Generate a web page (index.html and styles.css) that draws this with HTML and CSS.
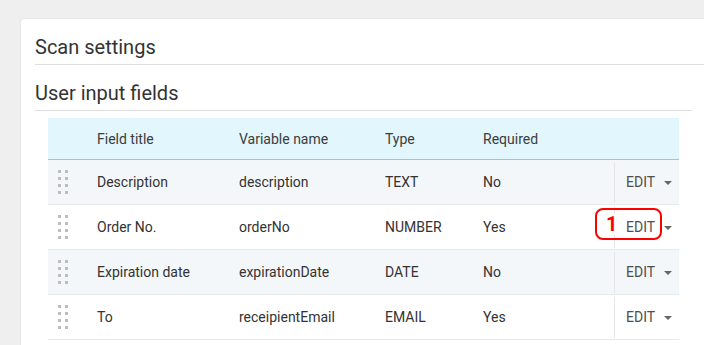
FILE: index.html
```html
<!DOCTYPE html>
<html lang="en">
<head>
  <meta charset="UTF-8">
  <title>Scan settings</title>
  <link rel="stylesheet" href="styles.css">
</head>
<body>
  <div class="card">
    <h2 class="section-title">Scan settings</h2>

    <div class="fields">
      <h2 class="section-title">User input fields</h2>

      <div class="field-table">
        <!-- header row -->
        <div class="row head">
          <div class="cell"></div>
          <div class="cell">Field title</div>
          <div class="cell">Variable name</div>
          <div class="cell">Type</div>
          <div class="cell">Required</div>
          <div class="cell"></div>
        </div>

        <div class="row odd">
          <div class="cell handle"><svg width="10" height="24" viewBox="0 0 10 24"><g fill="#bdbdbd"><rect x="0" y="0" width="3" height="3"/><rect x="7" y="0" width="3" height="3"/><rect x="0" y="7" width="3" height="3"/><rect x="7" y="7" width="3" height="3"/><rect x="0" y="14" width="3" height="3"/><rect x="7" y="14" width="3" height="3"/><rect x="0" y="21" width="3" height="3"/><rect x="7" y="21" width="3" height="3"/></g></svg></div>
          <div class="cell">Description</div>
          <div class="cell">description</div>
          <div class="cell">TEXT</div>
          <div class="cell">No</div>
          <div class="cell action"><span class="edit">EDIT</span><span class="caret"></span></div>
        </div>

        <div class="row">
          <div class="cell handle"><svg width="10" height="24" viewBox="0 0 10 24"><g fill="#bdbdbd"><rect x="0" y="0" width="3" height="3"/><rect x="7" y="0" width="3" height="3"/><rect x="0" y="7" width="3" height="3"/><rect x="7" y="7" width="3" height="3"/><rect x="0" y="14" width="3" height="3"/><rect x="7" y="14" width="3" height="3"/><rect x="0" y="21" width="3" height="3"/><rect x="7" y="21" width="3" height="3"/></g></svg></div>
          <div class="cell">Order No.</div>
          <div class="cell">orderNo</div>
          <div class="cell">NUMBER</div>
          <div class="cell">Yes</div>
          <div class="cell action">
            <span class="edit">EDIT</span><span class="caret"></span>
            <!-- callout marker -->
            <span class="callout"><span class="callout-num">1</span></span>
          </div>
        </div>

        <div class="row odd">
          <div class="cell handle"><svg width="10" height="24" viewBox="0 0 10 24"><g fill="#bdbdbd"><rect x="0" y="0" width="3" height="3"/><rect x="7" y="0" width="3" height="3"/><rect x="0" y="7" width="3" height="3"/><rect x="7" y="7" width="3" height="3"/><rect x="0" y="14" width="3" height="3"/><rect x="7" y="14" width="3" height="3"/><rect x="0" y="21" width="3" height="3"/><rect x="7" y="21" width="3" height="3"/></g></svg></div>
          <div class="cell">Expiration date</div>
          <div class="cell">expirationDate</div>
          <div class="cell">DATE</div>
          <div class="cell">No</div>
          <div class="cell action"><span class="edit">EDIT</span><span class="caret"></span></div>
        </div>

        <div class="row">
          <div class="cell handle"><svg width="10" height="24" viewBox="0 0 10 24"><g fill="#bdbdbd"><rect x="0" y="0" width="3" height="3"/><rect x="7" y="0" width="3" height="3"/><rect x="0" y="7" width="3" height="3"/><rect x="7" y="7" width="3" height="3"/><rect x="0" y="14" width="3" height="3"/><rect x="7" y="14" width="3" height="3"/><rect x="0" y="21" width="3" height="3"/><rect x="7" y="21" width="3" height="3"/></g></svg></div>
          <div class="cell">To</div>
          <div class="cell">receipientEmail</div>
          <div class="cell">EMAIL</div>
          <div class="cell">Yes</div>
          <div class="cell action"><span class="edit">EDIT</span><span class="caret"></span></div>
        </div>
      </div>
    </div>
  </div>
</body>
</html>
```

FILE: styles.css
```css
/* page base */
html, body {
  margin: 0;
  padding: 0;
  height: 100%;
  overflow: hidden;
  background-color: #efefef;
  font-family: Roboto, "Liberation Sans", Arial, sans-serif;
  color: #333;
}

.card {
  margin: 19px 0 0 21px;
  width: 690px;
  height: 326px;
  padding: 0 14px;
  background-color: #fff;
  border-radius: 3px 3px 0 0;
  box-shadow: 0 0 2px rgba(0, 0, 0, 0.12);
}

.section-title {
  margin: 0;
  padding: 16px 0 5px;
  font-size: 20px;
  font-weight: 400;
  line-height: 24px;
  color: #333;
  border-bottom: 1px solid #dedede;
}

.fields {
  margin-right: 33px;
}

/* table of fields */
.field-table {
  margin: 7px 13px 0;
  font-size: 14px;
}

.row {
  display: grid;
  grid-template-columns: 49px 142px 146px 98px 131px 65px;
  height: 44px;
  align-items: center;
  border-bottom: 1px solid #e6eaed;
  background-color: #fff;
}

.row.head {
  height: 41px;
  background-color: #e2f7fd;
  border-bottom: 1px solid #bcbcbc;
  color: #3c3c3c;
}

.row.odd {
  background-color: #f4f7f9;
}

.handle {
  display: flex;
  align-items: center;
  padding-left: 10px;
}

.handle svg {
  display: block;
}

/* edit button column */
.action {
  position: relative;
  display: flex;
  align-items: center;
  height: 41px;
  padding-left: 11px;
  border-left: 1px solid #e6e6e6;
  box-sizing: border-box;
}

.edit {
  color: #4f4f4f;
}

.caret {
  margin: 2px 0 0 9px;
  width: 0;
  height: 0;
  border-left: 4px solid transparent;
  border-right: 4px solid transparent;
  border-top: 4px solid #666;
}

/* red numbered annotation over the edit button */
.callout {
  position: absolute;
  left: -20px;
  top: 1px;
  width: 67px;
  height: 32px;
  border: 2px solid #f00;
  border-radius: 8px;
  box-sizing: border-box;
  display: flex;
  align-items: center;
  padding-left: 9px;
}

.callout-num {
  font-size: 20px;
  font-weight: 700;
  color: #f00;
  background-color: #fff;
  padding-right: 1px;
  line-height: 22px;
}
```
